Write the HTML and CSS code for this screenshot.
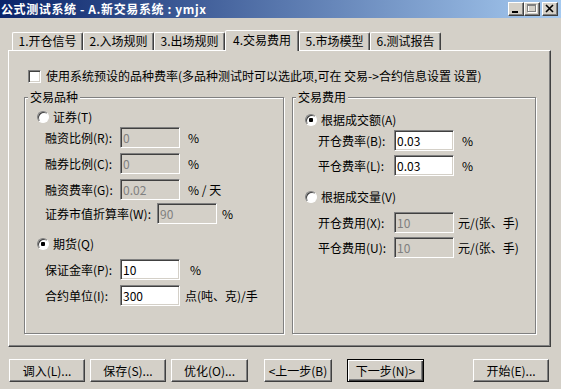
FILE: index.html
```html
<!DOCTYPE html>
<html lang="zh-CN">
<head>
  <meta charset="UTF-8">
  <title>公式测试系统</title>
  <link rel="stylesheet" href="styles.css">
</head>
<body>

  <div class="window">
    <div class="titlebar">
      <span class="title">公式测试系统 - A.新交易系统 : ymjx</span>
      <div class="caption-buttons">
        <span class="cap-btn">
          <svg width="14" height="12" viewBox="0 0 14 12"><rect x="3" y="8" width="6" height="2" fill="#000"/></svg>
        </span>
        <span class="cap-btn">
          <svg width="14" height="12" viewBox="0 0 14 12">
            <rect x="3.5" y="2.5" width="8" height="7" fill="none" stroke="#fff"/>
            <rect x="2.5" y="1.5" width="8" height="7" fill="none" stroke="#808080"/>
            <line x1="2" y1="2.5" x2="11" y2="2.5" stroke="#808080"/>
          </svg>
        </span>
        <span class="cap-btn close">
          <svg width="14" height="12" viewBox="0 0 14 12">
            <path d="M3 2 L10 9 M10 2 L3 9" stroke="#000" stroke-width="1.6"/>
          </svg>
        </span>
      </div>
    </div>

    <div class="tabs">
      <div class="tab">1.开仓信号</div>
      <div class="tab">2.入场规则</div>
      <div class="tab">3.出场规则</div>
      <div class="tab active">4.交易费用</div>
      <div class="tab">5.市场模型</div>
      <div class="tab">6.测试报告</div>
    </div>

    <div class="panel">
      <label class="usedefault"><input type="checkbox" class="chk">使用系统预设的品种费率(多品种测试时可以选此项,可在 交易-&gt;合约信息设置 设置)</label>

      <div class="groups">
        <fieldset class="group group-left">
          <legend>交易品种</legend>

          <label class="opt mt5"><input type="radio" name="kind" class="rad">证券(T)</label>
          <div class="field mt2">
            <span class="lbl">融资比例(R):</span>
            <input class="edit" value="0" disabled>
            <span class="unit ml8">%</span>
          </div>
          <div class="field mt5">
            <span class="lbl">融券比例(C):</span>
            <input class="edit" value="0" disabled>
            <span class="unit ml8">%</span>
          </div>
          <div class="field mt5">
            <span class="lbl">融资费率(G):</span>
            <input class="edit" value="0.02" disabled>
            <span class="unit ml8">% / 天</span>
          </div>
          <div class="field mt3">
            <span class="lbl lbl-wide">证券市值折算率(W):</span>
            <input class="edit" value="90" disabled>
            <span class="unit ml5">%</span>
          </div>

          <label class="opt mt12"><input type="radio" name="kind" class="rad" checked>期货(Q)</label>
          <div class="field mt7">
            <span class="lbl">保证金率(P):</span>
            <input class="edit" value="10">
            <span class="unit ml10">%</span>
          </div>
          <div class="field mt5">
            <span class="lbl">合约单位(I):</span>
            <input class="edit" value="300">
            <span class="unit ml5">点(吨、克)/手</span>
          </div>
        </fieldset>

        <fieldset class="group group-right">
          <legend>交易费用</legend>

          <label class="opt mt8"><input type="radio" name="fee" class="rad" checked>根据成交额(A)</label>
          <div class="field mt2">
            <span class="lbl">开仓费率(B):</span>
            <input class="edit" value="0.03">
            <span class="unit ml8">%</span>
          </div>
          <div class="field mt4">
            <span class="lbl">平仓费率(L):</span>
            <input class="edit" value="0.03">
            <span class="unit ml8">%</span>
          </div>

          <label class="opt mt13"><input type="radio" name="fee" class="rad">根据成交量(V)</label>
          <div class="field mt7">
            <span class="lbl">开仓费用(X):</span>
            <input class="edit" value="10" disabled>
            <span class="unit ml4">元/(张、手)</span>
          </div>
          <div class="field mt4">
            <span class="lbl">平仓费用(U):</span>
            <input class="edit" value="10" disabled>
            <span class="unit ml4">元/(张、手)</span>
          </div>
        </fieldset>
      </div>
    </div>

    <div class="buttons">
      <button class="btn">调入(L)...</button>
      <button class="btn ml5">保存(S)...</button>
      <button class="btn w77 ml5">优化(O)...</button>
      <button class="btn w68 ml16">&lt;上一步(B)</button>
      <button class="btn w77 ml15 default">下一步(N)&gt;</button>
      <button class="btn ml49">开始(E)...</button>
    </div>
  </div>

</body>
</html>
```

FILE: styles.css
```css
body {
  margin: 0;
  background-color: #d4d0c8;
  color: #000;
  font: 12px/14px "Noto Sans CJK SC", sans-serif;
}
.window {
  width: 561px;
  height: 389px;
  overflow: hidden;
}

/* title bar */
.titlebar {
  height: 18px;
  background: linear-gradient(to right, #0a246a, #a6caf0);
  display: flex;
  align-items: center;
  justify-content: space-between;
  padding: 0 3px 0 1px;
}
.title {
  color: #fff;
  font-weight: bold;
  letter-spacing: 0.6px;
  white-space: pre;
}
.caption-buttons {
  display: flex;
}
.cap-btn {
  width: 16px;
  height: 14px;
  box-sizing: border-box;
  background-color: #d4d0c8;
  border: 1px solid;
  border-color: #fff #404040 #404040 #fff;
  box-shadow: inset -1px -1px 0 #808080;
  display: flex;
}
.cap-btn.close {
  margin-left: 2px;
}

/* tabs */
.tabs {
  display: flex;
  align-items: flex-end;
  height: 20px;
  margin: 12px 0 0 12px;
}
.tab {
  width: 71px;
  height: 18px;
  box-sizing: border-box;
  border: 1px solid;
  border-bottom: none;
  border-color: #fff #404040 transparent #fff;
  box-shadow: inset -1px 0 0 #808080;
  border-radius: 2px 2px 0 0;
  text-align: center;
  line-height: 16px;
  white-space: nowrap;
}
.tab.active {
  width: 74px;
  height: 21px;
  margin-bottom: -1px;
  position: relative;
  z-index: 1;
  background-color: #d4d0c8;
  line-height: 18px;
}

.panel {
  margin-left: 8px;
  width: 543px;
  height: 297px;
  box-sizing: border-box;
  border: 1px solid;
  border-color: #fff #404040 #404040 #fff;
  box-shadow: inset -1px -1px 0 #808080;
  padding-left: 15px;
}
.usedefault {
  display: flex;
  align-items: center;
  height: 14px;
  margin-top: 18px;
  padding-left: 4px;
  white-space: nowrap;
}

/* checkbox / radio / edit */
.chk, .rad {
  appearance: none;
  margin: 0;
  flex: none;
  background-color: #fff;
  border: 1px solid;
  border-color: #808080 #fff #fff #808080;
  box-sizing: border-box;
}
.chk {
  width: 13px;
  height: 13px;
  margin-right: 5px;
  box-shadow: inset 1px 1px 0 #404040, inset -1px -1px 0 #d4d0c8;
}
.rad {
  width: 12px;
  height: 12px;
  border-radius: 50%;
  margin-right: 4px;
  box-shadow: inset 1px 1px 0 #404040;
}
.rad:checked {
  background: radial-gradient(circle, #000 0, #000 2px, #fff 2.5px);
}

.groups {
  display: flex;
  gap: 8px;
  margin-top: 7px;
}
.group {
  margin: 0;
  padding: 0;
  min-width: 0;
  height: 244px;
  box-sizing: border-box;
  border: 1px solid #808080;
  box-shadow: inset 1px 1px 0 #fff, 1px 1px 0 #fff;
}
.group-left {
  width: 260px;
}
.group-right {
  width: 244px;
}
.group legend {
  margin-left: 3px;
  padding: 0 2px;
  line-height: 14px;
  background-color: #d4d0c8;
}

.opt {
  display: flex;
  align-items: center;
  height: 16px;
  padding-left: 12px;
}
.field {
  display: flex;
  align-items: center;
  height: 21px;
  padding-left: 20px;
  white-space: nowrap;
}
.group-right .field {
  padding-left: 25px;
}
.lbl {
  width: 75px;
}
.lbl-wide {
  width: 112px;
}
.group-right .lbl {
  width: 76px;
}
.edit {
  width: 60px;
  height: 21px;
  box-sizing: border-box;
  margin: 0;
  padding: 0 2px;
  font: 12px "Noto Sans CJK SC", sans-serif;
  color: #000;
  background-color: #fff;
  border: 1px solid;
  border-color: #808080 #fff #fff #808080;
  box-shadow: inset 1px 1px 0 #404040, inset -1px -1px 0 #d4d0c8;
  outline: none;
}
.edit:disabled {
  background-color: #d4d0c8;
  color: #808080;
}

/* bottom buttons */
.buttons {
  display: flex;
  margin-top: 12px;
  padding-left: 9px;
}
.btn {
  width: 76px;
  height: 23px;
  margin: 0;
  padding: 0;
  background-color: #d4d0c8;
  border: 1px solid;
  border-color: #fff #404040 #404040 #fff;
  box-shadow: inset -1px -1px 0 #808080;
  font: 12px "Noto Sans CJK SC", sans-serif;
  color: #000;
  white-space: nowrap;
}
.btn.default {
  border-color: #000;
  box-shadow: inset 1px 1px 0 #fff, inset -1px -1px 0 #404040, inset -2px -2px 0 #808080;
}
.w77 { width: 77px; }
.w68 { width: 68px; }

.mt2 { margin-top: 2px; }
.mt3 { margin-top: 3px; }
.mt4 { margin-top: 4px; }
.mt5 { margin-top: 5px; }
.mt7 { margin-top: 7px; }
.mt8 { margin-top: 8px; }
.mt12 { margin-top: 12px; }
.mt13 { margin-top: 13px; }
.ml4 { margin-left: 4px; }
.ml5 { margin-left: 5px; }
.ml8 { margin-left: 8px; }
.ml10 { margin-left: 10px; }
.ml15 { margin-left: 15px; }
.ml16 { margin-left: 16px; }
.ml49 { margin-left: 49px; }
```
